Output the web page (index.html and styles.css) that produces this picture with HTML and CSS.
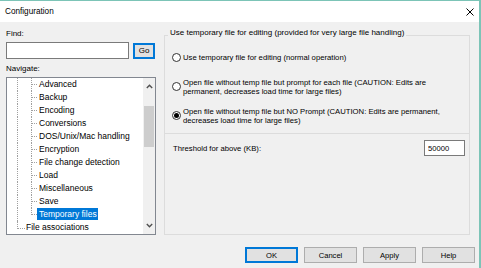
FILE: index.html
```html
<!DOCTYPE html>
<html>
<head>
<meta charset="utf-8">
<link rel="stylesheet" href="styles.css">
</head>
<body>
<div class="window">
  <div class="titlebar">
    <span class="title">Configuration</span>
    <svg class="close" viewBox="0 0 8 8" width="8" height="8"><path d="M0.5 0.5 L7.5 7.5 M7.5 0.5 L0.5 7.5" stroke="#000" stroke-width="1" fill="none"/></svg>
  </div>
  <div class="content">
    <div class="main">
      <div class="nav">
        <div class="label find-label">Find:</div>
        <div class="find-row">
          <input class="find-input" type="text">
          <button class="btn btn-default go">Go</button>
        </div>
        <div class="label nav-label">Navigate:</div>
        <div class="tree">
          <ul class="tree-list">
            <li class="child"><span class="txt">Advanced</span></li>
            <li class="child"><span class="txt">Backup</span></li>
            <li class="child"><span class="txt">Encoding</span></li>
            <li class="child"><span class="txt">Conversions</span></li>
            <li class="child"><span class="txt">DOS/Unix/Mac handling</span></li>
            <li class="child"><span class="txt">Encryption</span></li>
            <li class="child"><span class="txt">File change detection</span></li>
            <li class="child"><span class="txt">Load</span></li>
            <li class="child"><span class="txt">Miscellaneous</span></li>
            <li class="child"><span class="txt">Save</span></li>
            <li class="child last"><span class="txt sel">Temporary files</span></li>
            <li class="top last"><span class="txt">File associations</span></li>
          </ul>
          <div class="scrollbar">
            <div class="sb-btn"><svg viewBox="0 0 7 5" width="7" height="5"><path d="M0.8 4 L3.5 1.3 L6.2 4" stroke="#505050" stroke-width="1.4" fill="none"/></svg></div>
            <div class="sb-track"><div class="sb-thumb"></div></div>
            <div class="sb-btn"><svg viewBox="0 0 7 5" width="7" height="5"><path d="M0.8 1 L3.5 3.7 L6.2 1" stroke="#505050" stroke-width="1.4" fill="none"/></svg></div>
          </div>
        </div>
      </div>
      <fieldset class="panel">
        <legend class="legend">Use temporary file for editing (provided for very large file handling)</legend>
        <div class="options">
          <label class="option"><span class="radio"></span><span class="opt-text">Use temporary file for editing (normal operation)</span></label>
          <label class="option"><span class="radio"></span><span class="opt-text">Open file without temp file but prompt for each file (CAUTION: Edits are<br>permanent, decreases load time for large files)</span></label>
          <label class="option"><span class="radio checked"></span><span class="opt-text">Open file without temp file but NO Prompt (CAUTION: Edits are permanent,<br>decreases load time for large files)</span></label>
        </div>
        <div class="threshold">
          <span class="th-label">Threshold for above (KB):</span>
          <input class="th-input" type="text" value="50000">
        </div>
      </fieldset>
    </div>
    <div class="buttons">
      <button class="btn btn-default">OK</button>
      <button class="btn">Cancel</button>
      <button class="btn">Apply</button>
      <button class="btn">Help</button>
    </div>
  </div>
</div>
</body>
</html>
```
FILE: styles.css
```css
* { box-sizing: border-box; }
html, body { margin: 0; padding: 0; }
body {
  width: 481px;
  height: 268px;
  overflow: hidden;
  font-family: "Liberation Sans", Arial, sans-serif;
  color: #000;
  background: #f0f0f0;
}
.window {
  width: 481px;
  height: 268px;
  border-top: 1px solid #7cc4b7;
  border-right: 2px solid #7cc4b7;
  display: flex;
  flex-direction: column;
  background: #f0f0f0;
}
.titlebar {
  height: 21px;
  flex: none;
  background: #fff;
  display: flex;
  align-items: center;
  justify-content: space-between;
  padding: 0 5px 0 5px;
}
.title { font-size: 8.2px; }
.close { display: block; }
.content { flex: 1; display: flex; flex-direction: column; }
.main { display: flex; padding-left: 6px; gap: 8px; }

.nav { width: 150px; display: flex; flex-direction: column; }
.label { font-size: 8px; line-height: 10px; }
.find-label { margin-top: 7px; }
.find-row { margin-top: 3px; display: flex; align-items: center; gap: 4px; }
.find-input {
  width: 123px; height: 17px; margin: 0; padding: 0 2px;
  border: 1px solid #7a7a7a; background: #fff; outline: none;
}
.nav-label { margin-top: 5px; }

.btn {
  margin: 0; padding: 0;
  height: 16px; width: 53px;
  background: #e1e1e1;
  border: 1px solid #adadad;
  font-family: "Liberation Sans", Arial, sans-serif;
  font-size: 7.6px;
  color: #000;
}
.btn-default { border-color: #0078d7; box-shadow: inset 0 0 0 1px #0078d7; }
.go { width: 22px; height: 16px; font-size: 8px; }

.tree {
  margin-top: 3px;
  height: 158px;
  border: 1px solid #828790;
  background: #fff;
  display: flex;
}
.tree-list { list-style: none; margin: 0; padding: 0; flex: 1; font-size: 8.5px; }
.tree-list li { position: relative; height: 13px; line-height: 13px; white-space: nowrap; }
.tree-list .child { padding-left: 30px; }
.tree-list .top { padding-left: 17px; }
.tree-list .child::before {
  content: ""; position: absolute; left: 10px; top: 0; bottom: 0;
  border-left: 1px dotted #a0a0a0;
}
.tree-list .child::after {
  content: ""; position: absolute; left: 24px; top: 0; bottom: 0;
  border-left: 1px dotted #a0a0a0;
}
.tree-list .child.last::after { bottom: auto; height: 7px; }
.tree-list .top::before {
  content: ""; position: absolute; left: 10px; top: 0; height: 7px; width: 7px;
  border-left: 1px dotted #a0a0a0; border-bottom: 1px dotted #a0a0a0;
}
.txt { position: relative; padding: 0 1px 0 2px; display: inline-block; line-height: 12px; }
.child .txt::before {
  content: ""; position: absolute; left: -6px; top: 6px; width: 6px;
  border-top: 1px dotted #a0a0a0;
}
.sel { background: #0078d7; color: #fff; }

.scrollbar { width: 12px; flex: none; background: #f0f0f0; display: flex; flex-direction: column; }
.sb-btn { height: 17px; display: flex; align-items: center; justify-content: center; }
.sb-btn svg { display: block; }
.sb-track { flex: 1; padding: 11px 1px 0 1px; }
.sb-thumb { height: 41px; background: #cdcdcd; }

.panel {
  margin: 6px 0 0 0;
  padding: 0;
  width: 306px;
  height: 207px;
  border: 1px solid #dcdcdc;
  min-inline-size: 0;
  display: flex;
  flex-direction: column;
}
.legend {
  margin-left: 3px;
  padding: 0 2px 6px 2px;
  font-size: 8px;
  line-height: 9px;
  white-space: nowrap;
}
.options { display: flex; flex-direction: column; padding-left: 7px; }
.option { height: 29px; display: flex; align-items: center; gap: 2px; }
.radio {
  width: 9px; height: 9px; border-radius: 50%;
  border: 1px solid #333; background: #fff; flex: none;
  display: flex; align-items: center; justify-content: center;
}
.radio.checked::after {
  content: ""; width: 5px; height: 5px; border-radius: 50%; background: #000;
}
.opt-text { font-size: 7.7px; line-height: 9px; white-space: nowrap; }
.threshold {
  margin-top: 3px;
  border-top: 1px solid #dcdcdc;
  padding: 6px 4px 0 8px;
  display: flex;
  align-items: center;
  justify-content: space-between;
}
.th-label { font-size: 7.7px; }
.th-input {
  width: 41px; height: 16px; margin: 0; padding: 0 3px;
  border: 1px solid #7a7a7a; background: #fff;
  font-family: "Liberation Sans", Arial, sans-serif; font-size: 7.6px;
  outline: none;
}

.buttons {
  margin-top: 12px;
  display: flex;
  justify-content: flex-end;
  gap: 6px;
  padding-right: 4px;
}
```
